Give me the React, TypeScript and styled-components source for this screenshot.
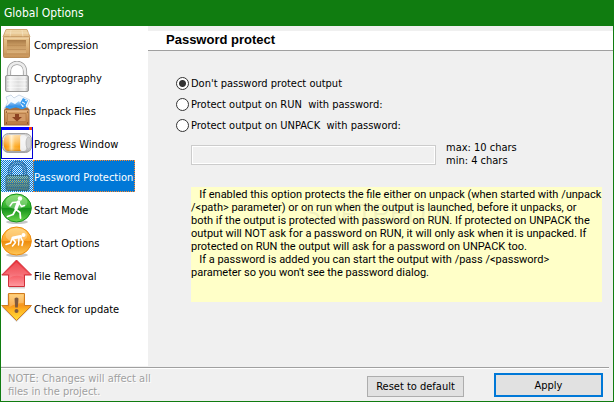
import React, { useState } from 'react';
import styled, { createGlobalStyle, css } from 'styled-components';

const GlobalStyle = createGlobalStyle`
  *, *::before, *::after { box-sizing: border-box; }
  body { margin: 0; background: #f0f0f0; }
  body, button, input {
    font-family: "DejaVu Sans Condensed", "DejaVu Sans", sans-serif;
    font-size: 11px;
    line-height: 13px;
    color: #000;
  }
`;

const Window = styled.div`
  display: flex;
  flex-direction: column;
  min-height: 100vh;
  border: 1px solid #107c10;
  background: #f0f0f0;
`;

const TitleBar = styled.header`
  display: flex;
  align-items: center;
  height: 25px;
  padding: 0 3px;
  background: #107c10;
  color: #fff;
  font-size: 12px;
`;

const Body = styled.div`
  display: flex;
  flex: 1;
`;

const Sidebar = styled.nav`
  display: flex;
  flex-direction: column;
  gap: 1px;
  width: 147px;
  flex: none;
  padding-top: 2px;
  background: #fff;
`;

const NavItem = styled.button<{ $selected: boolean }>`
  display: flex;
  align-items: center;
  align-self: flex-start;
  height: 32px;
  padding: 0;
  border: 0;
  background: none;
  white-space: nowrap;
  svg { flex: none; display: block; }
  span {
    display: flex;
    align-items: center;
    height: 32px;
    padding: 2px 1px 0 0;
    border: 1px solid transparent;
    ${p => p.$selected && css`
      background: #0078d7;
      border: 1px dotted #ff8728;
      color: #fff;
    `}
  }
`;

const Main = styled.main`
  flex: 1;
  min-width: 0;
  padding-top: 5px;
`;

const Heading = styled.h1`
  margin: 0;
  padding: 1px 18px 0;
  height: 20px;
  background: #fff;
  border-bottom: 1px solid #a0a0a0;
  font: bold 13px/16px "Liberation Sans", Arial, sans-serif;
`;

const Form = styled.form`
  padding: 22px 11px 0 28px;
`;

const Radio = styled.label`
  display: flex;
  align-items: center;
  gap: 2px;
  height: 21px;
  white-space: pre;
  input {
    appearance: none;
    width: 13px;
    height: 13px;
    margin: 0;
    border: 1px solid #333;
    border-radius: 50%;
    background: #fff;
  }
  input:checked {
    background: radial-gradient(circle, #333 0 3px, #fff 4px);
  }
`;

const Indented = styled.div`
  padding-left: 15px;
`;

const PasswordRow = styled.div`
  display: flex;
  gap: 10px;
  padding-top: 5px;
`;

const PasswordInput = styled.input`
  flex: 0 1 245px;
  min-width: 0;
  height: 20px;
  margin-top: 4px;
  padding: 0 4px;
  border: 1px solid #ccc;
  outline: 1px solid #fff;
  outline-offset: -2px;
  background: #f0f0f0;
`;

const Limits = styled.div`
  white-space: pre-line;
  flex: none;
`;

const Info = styled.div`
  position: relative;
  margin-top: 20px;
  min-height: 115px;
  padding-top: 1px;
  background: #ffffc8;
  font-family: Roboto, sans-serif;
  white-space: pre-wrap;
`;

const Watermark = styled.span`
  position: absolute;
  top: 12px;
  left: 112px;
  font: 26px/28px "Liberation Sans", Arial, sans-serif;
  color: rgba(150, 150, 130, 0.14);
  pointer-events: none;
`;

const Footer = styled.footer`
  display: flex;
  gap: 30px;
  align-items: flex-start;
  margin-top: 1px;
  height: 31px;
`;

const Rule = styled.hr`
  width: calc(100% - 4px);
  height: 2px;
  margin: 1px 0 0;
  border: 0;
  border-top: 1px solid #a0a0a0;
  border-bottom: 1px solid #fff;
`;

const Note = styled.p`
  flex: 1;
  margin: 0;
  padding: 2px 0 0 7px;
  color: #a0a0a0;
  text-shadow: 1px 1px #fff;
  white-space: pre-line;
`;

const Button = styled.button<{ $primary?: boolean }>`
  width: ${p => (p.$primary ? 109 : 97)}px;
  height: ${p => (p.$primary ? 24 : 21)}px;
  margin-top: ${p => (p.$primary ? 3 : 6)}px;
  padding: 0;
  border: ${p => (p.$primary ? '2px solid #0078d7' : '1px solid #adadad')};
  background: #e1e1e1;
  white-space: nowrap;
`;

const Actions = styled.div`
  display: flex;
  gap: 30px;
  padding-right: 10px;
`;

const Icon = ({ children }: { children: React.ReactNode }) => (
  <svg width="32" height="32" viewBox="0 0 32 32" aria-hidden="true">{children}</svg>
);

const Lin = ({ id, stops, h }: { id: string; stops: [number, string][]; h?: boolean }) => (
  <linearGradient id={id} x1="0" y1="0" x2={h ? 1 : 0} y2={h ? 0 : 1}>
    {stops.map(([o, c]) => <stop key={o} offset={o} stopColor={c} />)}
  </linearGradient>
);

const BoxIcon = () => (
  <Icon>
    <defs>
      <Lin id="boxTop" stops={[[0, '#f0d8ac'], [1, '#e3bd84']]} />
      <Lin id="boxFront" stops={[[0, '#e8c48c'], [1, '#c9955a']]} />
      <Lin id="boxIn" stops={[[0, '#a97b48'], [0.4, '#c89a61'], [1, '#dbb17b']]} />
    </defs>
    <path d="M5 1.5H26L29 9H2Z" fill="url(#boxTop)" stroke="#cfa671" />
    <path d="M4 5H28M10 2L9 9M21 2L22 9" stroke="#f8e8c8" strokeWidth=".6" />
    <rect x="2.5" y="9" width="26" height="20.5" rx="1" fill="url(#boxFront)" stroke="#b98a55" />
    <path d="M3 10H28" stroke="#f8dfb5" />
    <rect x="6" y="12" width="19" height="13" fill="url(#boxIn)" />
    <path d="M6 17.5H25M6 21.5H25M3 26H28" stroke="#b58650" strokeWidth=".6" />
  </Icon>
);

const LockIcon = () => (
  <Icon>
    <defs>
      <Lin id="lockBody" h stops={[[0, '#bcbcbc'], [0.2, '#f7f7f7'], [0.55, '#dedede'], [0.85, '#f0f0f0'], [1, '#a8a8a8']]} />
    </defs>
    <path d="M8 16V10.5C8 -1 24 -1 24 10.5V16" fill="none" stroke="#9c9c9c" strokeWidth="4.2" />
    <path d="M8 16V10.5C8 -1 24 -1 24 10.5V16" fill="none" stroke="#ececec" strokeWidth="2.6" />
    <rect x="4.5" y="14.5" width="23" height="16" rx="1.5" fill="url(#lockBody)" stroke="#999" />
    <path d="M6 16H26M6 19.5H26M6 23H26M6 26.5H26" stroke="#fff" strokeWidth=".7" opacity=".7" />
  </Icon>
);

const UnpackIcon = () => (
  <Icon>
    <defs>
      <Lin id="upSky" stops={[[0, '#a9d8fb'], [1, '#1878e0']]} />
      <Lin id="upCrate" stops={[[0, '#dba66d'], [1, '#b97740']]} />
    </defs>
    <path d="M5 3L10 1L13 4L18 1L29 6L25 15H3L7 8Z" fill="#f5faff" stroke="#b9c9dc" strokeWidth=".7" />
    <path d="M4 14L10 8L14 10L18 7L22 14Z" fill="url(#upSky)" />
    <path d="M19 9L22 4L27 6.5L24 13Z" fill="#3b9df0" />
    <path d="M21 8L24 9.5M24 6L26 7" stroke="#fff" />
    <path d="M5 13.5H27L28.5 16H3.5Z" fill="#a87040" />
    <path d="M5 12.5L9 14L15 12L21 14.5L25 12.5" fill="none" stroke="#3799ec" strokeWidth="2" />
    <rect x="3.5" y="16" width="24.5" height="15" fill="url(#upCrate)" stroke="#a2693a" />
    <path d="M6.5 19.5H25V27.5H6.5Z" fill="#d29a66" stroke="#b07744" strokeWidth=".7" />
    <path d="M4 17H27.5" stroke="#efc595" />
    <path d="M14 20H18V23H21L16 27.5L11 23H14Z" fill="#8d4322" />
    <path d="M5 18H6M26 18H27M5 29H6M26 29H27" stroke="#5a2f15" />
  </Icon>
);

const ProgressIcon = () => (
  <Icon>
    <defs>
      <Lin id="pgOr" h stops={[[0, '#f08a00'], [0.28, '#ffa51c'], [0.45, '#ffe0a0'], [0.65, '#ffae28'], [1, '#f69a0c']]} />
      <Lin id="pgGr" stops={[[0, '#c4c4c4'], [0.3, '#ffffff'], [0.7, '#e2e2e2'], [1, '#9c9c9c']]} />
      <Lin id="pgSh" stops={[[0, '#ffffff99'], [0.4, '#ffffff55'], [0.75, '#ffffff00'], [1, '#b0600066']]} />
    </defs>
    <rect x=".5" y=".5" width="31" height="31" fill="#fff" stroke="#0000d8" />
    <rect width="32" height="3" fill="#00f" />
    <rect x="28" width="3" height="3" fill="#f03c14" />
    <rect x="1.5" y="6.5" width="29" height="19" rx="6" fill="url(#pgGr)" stroke="#a2a2a2" />
    <path d="M7 8H20V24H7Q2.5 23 2.5 16T7 8Z" fill="url(#pgOr)" />
    <path d="M7 8H20V24H7Q2.5 23 2.5 16T7 8Z" fill="url(#pgSh)" />
    <rect x="19" y="8" width="6" height="16" rx="2" fill="#f4f4f4" opacity=".85" />
    <ellipse cx="27.5" cy="16" rx="2.5" ry="6" fill="#d2d2d2" stroke="#aaa" strokeWidth=".6" />
  </Icon>
);

const ditherPath = Array.from({ length: 32 }, (_, y) =>
  Array.from({ length: 16 }, (_, x) => `M${x * 2 + (y % 2)} ${y}h1v1h-1z`).join(''),
).join('');

const SelectedLockIcon = () => (
  <Icon>
    <defs>
      <Lin id="gold" stops={[[0, '#f3df75'], [0.5, '#d9ae32'], [1, '#9e7717']]} />
    </defs>
    <rect width="32" height="32" fill="#fff" />
    <path d="M9 17V11C9 0 24 0 24 11V17" fill="none" stroke="#747474" strokeWidth="4.4" />
    <path d="M9 17V11C9 0 24 0 24 11V17" fill="none" stroke="#bcbcbc" strokeWidth="2" />
    <rect x="5" y="15.5" width="23" height="15" rx="1.5" fill="url(#gold)" stroke="#765916" />
    <path d="M6 19.5H27M6 23.5H27M6 27.5H27" stroke="#8a6a1d" strokeWidth=".8" />
    <rect width="32" height="32" fill="#0078d7" opacity=".15" />
    <path d={ditherPath} fill="#0078d7" shapeRendering="crispEdges" />
  </Icon>
);

const Ball = ({ id, light, mid, dark, children }: { id: string; light: string; mid: string; dark: string; children: React.ReactNode }) => (
  <Icon>
    <defs>
      <Lin id={id} stops={[[0, light], [0.48, mid], [0.52, dark], [1, light]]} />
    </defs>
    <ellipse cx="16" cy="29" rx="11" ry="2" fill="#000" opacity=".22" />
    <ellipse cx="15.5" cy="15" rx="14.8" ry="14" fill={`url(#${id})`} stroke={dark} />
    <ellipse cx="15.5" cy="9" rx="11" ry="7" fill="#fff" opacity=".25" />
    {children}
  </Icon>
);

const StartModeIcon = () => (
  <Ball id="ballGreen" light="#6ad84c" mid="#2fae2c" dark="#15911a">
    <circle cx="19" cy="5.5" r="2.2" fill="#fff" />
    <g fill="none" stroke="#fff" strokeLinecap="round" strokeLinejoin="round">
      <path d="M17.5 9L15 15.5" strokeWidth="3.4" />
      <path d="M17 9L11.5 9.5L9 13M18 10L20.5 13.5L23.5 12.5" strokeWidth="1.4" />
      <path d="M15 16.5L19 19.5L19.5 25M14.5 17L12 21.5L6.5 23.5" strokeWidth="1.8" />
    </g>
  </Ball>
);

const StartOptionsIcon = () => (
  <Ball id="ballOrange" light="#ffc95a" mid="#fca72e" dark="#ee8c0c">
    <circle cx="22.5" cy="9" r="2" fill="#fff" />
    <g fill="none" stroke="#fff" strokeLinecap="round" strokeLinejoin="round">
      <path d="M19.5 10.5L12 12" strokeWidth="3.2" />
      <path d="M19.5 11L22 15.5L21 19.5M18 12L17.5 19" strokeWidth="1.5" />
      <path d="M12 13L14.5 16.5L11.5 20M11 13L9.5 17L5 18.5" strokeWidth="1.6" />
    </g>
  </Ball>
);

const RemovalIcon = () => (
  <Icon>
    <defs><Lin id="redUp" stops={[[0, '#e8252f'], [0.5, '#f4525b'], [1, '#ff9ba0']]} /></defs>
    <path d="M8 28.5H24" stroke="#777" strokeWidth="2" opacity=".3" />
    <path d="M15.5 1L30.5 16H23.5V27.5H7.5V16H.8Z" fill="url(#redUp)" stroke="#cf3039" strokeLinejoin="round" />
    <path d="M15.5 3L27.5 15H22.5V18Q14 15 8.5 19V15H3.5Z" fill="#fff" opacity=".15" />
  </Icon>
);

const UpdateIcon = () => (
  <Icon>
    <defs><Lin id="orDown" stops={[[0, '#ffc65e'], [0.45, '#f7961c'], [0.6, '#ffb321'], [1, '#ffdf3e']]} /></defs>
    <path d="M15.5 30L.8 15H6.5V2H23.5V15H30.5Z" fill="#777" opacity=".3" />
    <path d="M15.5 28.5L.8 13.5H7.5V1.5H23.5V13.5H30.5Z" fill="url(#orDown)" stroke="#cf7b20" strokeLinejoin="round" />
    <path d="M8.5 2.5H22.5V11Q15 11 8.5 15Z" fill="#fff" opacity=".25" />
    <path d="M13.5 6.5Q15.5 4.5 17.5 6.5L16.8 15.5H14.2Z" fill="#805a3d" />
    <circle cx="15.5" cy="19" r="2" fill="#805a3d" />
  </Icon>
);

const sections = [
  { label: 'Compression', Glyph: BoxIcon },
  { label: 'Cryptography', Glyph: LockIcon },
  { label: 'Unpack Files', Glyph: UnpackIcon },
  { label: 'Progress Window', Glyph: ProgressIcon },
  { label: 'Password Protection', Glyph: SelectedLockIcon },
  { label: 'Start Mode', Glyph: StartModeIcon },
  { label: 'Start Options', Glyph: StartOptionsIcon },
  { label: 'File Removal', Glyph: RemovalIcon },
  { label: 'Check for update', Glyph: UpdateIcon },
];

const modes = [
  "Don't password protect output",
  'Protect output on RUN  with password:',
  'Protect output on UNPACK  with password:',
];

const help = `   If enabled this option protects the file either on unpack (when started with /unpack
/<path> parameter) or on run when the output is launched, before it unpacks, or
both if the output is protected with password on RUN. If protected on UNPACK the
output will NOT ask for a password on RUN, it will only ask when it is unpacked. If
protected on RUN the output will ask for a password on UNPACK too.
   If a password is added you can start the output with /pass /<password>
parameter so you won't see the password dialog.`;

export default function App() {
  const [section, setSection] = useState('Password Protection');
  const [mode, setMode] = useState(0);

  return (
    <Window>
      <GlobalStyle />
      <TitleBar>Global Options</TitleBar>
      <Body>
        <Sidebar>
          {sections.map(({ label, Glyph }) => (
            <NavItem key={label} type="button" $selected={label === section} onClick={() => setSection(label)}>
              <Glyph />
              <span>{label}</span>
            </NavItem>
          ))}
        </Sidebar>
        <Main>
          <Heading>Password protect</Heading>
          <Form>
            {modes.map((label, i) => (
              <Radio key={label}>
                <input type="radio" name="mode" checked={mode === i} onChange={() => setMode(i)} />
                {label}
              </Radio>
            ))}
            <Indented>
              <PasswordRow>
                <PasswordInput type="password" aria-label="Password" maxLength={10} disabled={mode === 0} />
                <Limits>{'max: 10 chars\nmin: 4 chars'}</Limits>
              </PasswordRow>
              <Info>
                {help}
                <Watermark aria-hidden="true">SOFTPEDIA</Watermark>
              </Info>
            </Indented>
          </Form>
        </Main>
      </Body>
      <Rule />
      <Footer>
        <Note>{'NOTE: Changes will affect all\nfiles in the project.'}</Note>
        <Actions>
          <Button type="button">Reset to default</Button>
          <Button type="button" $primary>Apply</Button>
        </Actions>
      </Footer>
    </Window>
  );
}
